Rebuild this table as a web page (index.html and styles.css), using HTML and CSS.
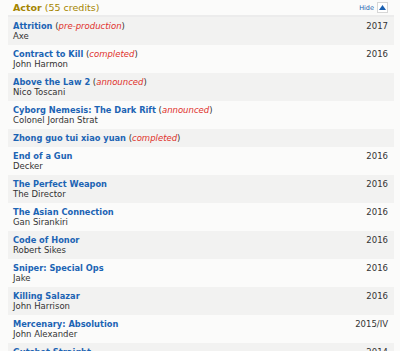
FILE: index.html
```html
<!DOCTYPE html>
<html>
<head>
<meta charset="utf-8">
<link rel="stylesheet" href="styles.css">
</head>
<body>
<div class="filmo">
  <div class="head">
    <div class="head-title"><b>Actor</b> (55 credits)</div>
    <div class="head-tools"><a class="hide">Hide</a><span class="arrow-btn"><svg width="7" height="5" viewBox="0 0 7 5"><path d="M0 5 L3.5 0 L7 5 Z" fill="#1a5fb0"/></svg></span></div>
  </div>
  <div class="row odd"><div class="info"><div class="title"><a>Attrition</a> <span class="paren">(<i>pre-production</i>)</span></div><div class="role">Axe</div></div><div class="year">2017</div></div>
  <div class="row even"><div class="info"><div class="title"><a>Contract to Kill</a> <span class="paren">(<i>completed</i>)</span></div><div class="role">John Harmon</div></div><div class="year">2016</div></div>
  <div class="row odd"><div class="info"><div class="title"><a>Above the Law 2</a> <span class="paren">(<i>announced</i>)</span></div><div class="role">Nico Toscani</div></div><div class="year"></div></div>
  <div class="row even"><div class="info"><div class="title"><a>Cyborg Nemesis: The Dark Rift</a> <span class="paren">(<i>announced</i>)</span></div><div class="role">Colonel Jordan Strat</div></div><div class="year"></div></div>
  <div class="row odd"><div class="info"><div class="title"><a>Zhong guo tui xiao yuan</a> <span class="paren">(<i>completed</i>)</span></div></div><div class="year"></div></div>
  <div class="row even"><div class="info"><div class="title"><a>End of a Gun</a></div><div class="role">Decker</div></div><div class="year">2016</div></div>
  <div class="row odd"><div class="info"><div class="title"><a>The Perfect Weapon</a></div><div class="role">The Director</div></div><div class="year">2016</div></div>
  <div class="row even"><div class="info"><div class="title"><a>The Asian Connection</a></div><div class="role">Gan Sirankiri</div></div><div class="year">2016</div></div>
  <div class="row odd"><div class="info"><div class="title"><a>Code of Honor</a></div><div class="role">Robert Sikes</div></div><div class="year">2016</div></div>
  <div class="row even"><div class="info"><div class="title"><a>Sniper: Special Ops</a></div><div class="role">Jake</div></div><div class="year">2016</div></div>
  <div class="row odd"><div class="info"><div class="title"><a>Killing Salazar</a></div><div class="role">John Harrison</div></div><div class="year">2016</div></div>
  <div class="row even"><div class="info"><div class="title"><a>Mercenary: Absolution</a></div><div class="role">John Alexander</div></div><div class="year">2015/IV</div></div>
  <div class="row odd"><div class="info"><div class="title"><a>Gutshot Straight</a></div><div class="role">Paulie Trunks</div></div><div class="year">2014</div></div>
</div>
</body>
</html>
```
FILE: styles.css
```css
html, body {
  margin: 0;
  padding: 0;
  background: #fbfbfa;
  overflow: hidden;
}
body {
  font-family: "DejaVu Sans", Verdana, sans-serif;
  font-size: 8.5px;
  color: #333;
}
.filmo {
  margin-left: 8px;
  width: 386px;
}
.head {
  height: 15px;
  border-bottom: 2px solid #ececec;
  display: flex;
  justify-content: space-between;
  align-items: center;
  padding-left: 5px;
  padding-right: 6px;
}
.head-title {
  font-size: 9.5px;
  color: #a58500;
  line-height: 14px;
}
.head-title b {
  font-weight: bold;
}
.head-tools {
  display: flex;
  align-items: center;
  gap: 3px;
}
.hide {
  font-size: 6.5px;
  color: #1a5fb0;
}
.arrow-btn {
  width: 9px;
  height: 9px;
  border: 1px solid #d6d6d6;
  background: #fff;
  display: flex;
  align-items: center;
  justify-content: center;
}
.row {
  display: flex;
  justify-content: space-between;
  padding: 4px 6px 4px 5px;
  line-height: 10px;
}
.row.odd {
  background: #f2f2f1;
}
.row.even {
  background: #fbfbfa;
}
.title a {
  color: #1c64b4;
  font-weight: bold;
  font-size: 8.25px;
}
.title .paren {
  color: #333;
}
.title i {
  color: #e0302a;
}
.role {
  color: #333;
}
.year {
  color: #333;
}
```
